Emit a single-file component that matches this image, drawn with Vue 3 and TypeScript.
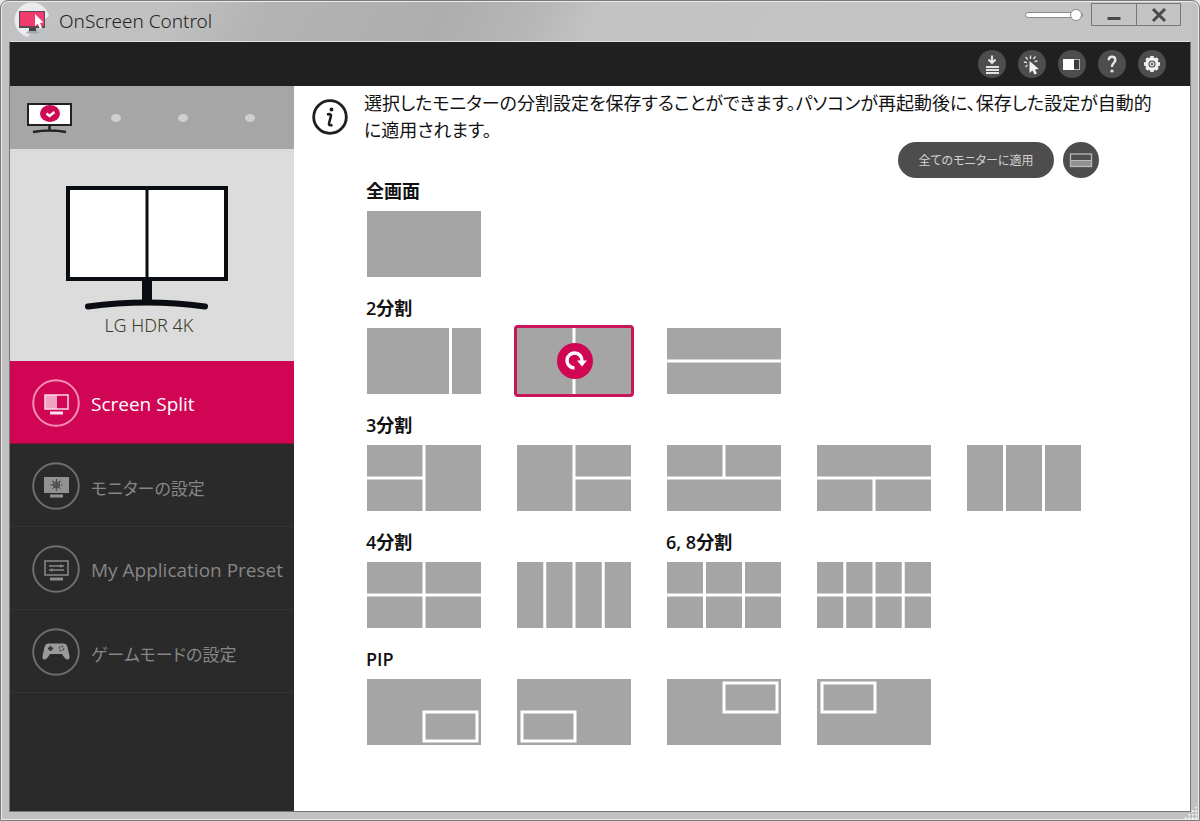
<script setup lang="ts">
import { ref } from 'vue'

type Rect = [number, number, number, number]

interface Layout {
  id: string
  label: string
  cells: Rect[]
  pip?: [number, number]
}

interface Group {
  title: string
  layouts: Layout[]
}

const grid = (cols: number, rows: number): Rect[] => {
  const gap = 3
  const w = (114 - gap * (cols - 1)) / cols
  const h = (66 - gap * (rows - 1)) / rows
  const out: Rect[] = []
  for (let r = 0; r < rows; r++) {
    for (let c = 0; c < cols; c++) out.push([c * (w + gap), r * (h + gap), w, h])
  }
  return out
}

const rows: Group[][] = [
  [{ title: '全画面', layouts: [{ id: 'full', label: '全画面', cells: grid(1, 1) }] }],
  [
    {
      title: '2分割',
      layouts: [
        { id: '2a', label: '左右 3:1', cells: [[0, 0, 82, 66], [85, 0, 29, 66]] },
        { id: '2b', label: '左右 1:1', cells: grid(2, 1) },
        { id: '2c', label: '上下 1:1', cells: grid(1, 2) },
      ],
    },
  ],
  [
    {
      title: '3分割',
      layouts: [
        { id: '3a', label: '左2 右1', cells: [[0, 0, 55.5, 31.5], [0, 34.5, 55.5, 31.5], [58.5, 0, 55.5, 66]] },
        { id: '3b', label: '左1 右2', cells: [[0, 0, 55.5, 66], [58.5, 0, 55.5, 31.5], [58.5, 34.5, 55.5, 31.5]] },
        { id: '3c', label: '上2 下1', cells: [[0, 0, 55.5, 31.5], [58.5, 0, 55.5, 31.5], [0, 34.5, 114, 31.5]] },
        { id: '3d', label: '上1 下2', cells: [[0, 0, 114, 31.5], [0, 34.5, 55.5, 31.5], [58.5, 34.5, 55.5, 31.5]] },
        { id: '3e', label: '縦3列', cells: grid(3, 1) },
      ],
    },
  ],
  [
    {
      title: '4分割',
      layouts: [
        { id: '4a', label: '2×2', cells: grid(2, 2) },
        { id: '4b', label: '縦4列', cells: grid(4, 1) },
      ],
    },
    {
      title: '6, 8分割',
      layouts: [
        { id: '6', label: '3×2', cells: grid(3, 2) },
        { id: '8', label: '4×2', cells: grid(4, 2) },
      ],
    },
  ],
  [
    {
      title: 'PIP',
      layouts: [
        { id: 'p1', label: '右下', cells: grid(1, 1), pip: [57, 33] },
        { id: 'p2', label: '左下', cells: grid(1, 1), pip: [5, 33] },
        { id: 'p3', label: '右上', cells: grid(1, 1), pip: [57, 4] },
        { id: 'p4', label: '左上', cells: grid(1, 1), pip: [5, 4] },
      ],
    },
  ],
]

const menu = [
  { id: 'split', label: 'Screen Split', lang: 'en' },
  { id: 'monitor', label: 'モニターの設定', lang: 'ja' },
  { id: 'preset', label: 'My Application Preset', lang: 'en' },
  { id: 'game', label: 'ゲームモードの設定', lang: 'ja' },
]

const activeMenu = ref('split')
const selected = ref('2b')
const opacity = ref(100)
</script>

<template>
  <div class="window">
    <header class="titlebar">
      <svg class="app-icon" viewBox="0 0 38 38" aria-hidden="true">
        <circle cx="19" cy="18" r="17.500" fill="#e9ebef" />
        <path d="M37 13.500Q24 21 14 36L20 38H38V13.500Z" fill="#bfc1c4" />
        <path d="M15 29h9l3 2.500h-14z" fill="#9faab2" />
        <rect x="6" y="9" width="26" height="17" fill="#5a4a55" />
        <rect x="7" y="10" width="24" height="14" fill="#f23a6c" />
        <rect x="16" y="26" width="7" height="3" fill="#444" />
        <path d="M22 12v12l2.800-2 2 4.500 2.200-1-2-4.500 3.500-.5z" fill="#fff" />
      </svg>
      <h1>OnScreen Control</h1>
      <input v-model="opacity" class="slider" type="range" min="0" max="100" aria-label="透明度" />
      <div class="win-buttons">
        <button type="button" aria-label="最小化">
          <svg viewBox="0 0 16 16"><path d="M1.500 11.500h13" stroke="#4a4a4a" stroke-width="3" /></svg>
        </button>
        <button type="button" aria-label="閉じる">
          <svg viewBox="0 0 16 16"><path d="M2 2l12 12M14 2L2 14" stroke="#4a4a4a" stroke-width="3" /></svg>
        </button>
      </div>
    </header>

    <div class="frame">
      <div class="toolbar">
        <button type="button" aria-label="ダウンロード">
          <svg viewBox="0 0 28 28">
            <path d="M14 5.500v7M10.500 9.500l3.500 3.500 3.500-3.500" fill="none" stroke="#e2e2e2" stroke-width="2" />
            <path d="M8 17h13M8 20h13M8 23h13" stroke="#e2e2e2" stroke-width="1.800" />
          </svg>
        </button>
        <button type="button" aria-label="クリック">
          <svg viewBox="0 0 28 28">
            <path d="M11.500 11v12l3-2.400 2 4 2.400-1.200-2-3.900 4-.5z" fill="#f2f2f2" />
            <path d="M12.500 9V5.500M15.500 9l2-2.700M9.800 9.500L7.500 7M9 12.500l-3.200-.5M9.500 15l-2 2M16.500 11.500l3-.5" stroke="#dcdcdc" stroke-width="1.400" />
          </svg>
        </button>
        <button type="button" aria-label="画面分割">
          <svg viewBox="0 0 28 28">
            <rect x="5.500" y="9.500" width="16" height="10" fill="#3c3c3c" stroke="#b5b5b5" />
            <rect x="5" y="9" width="11" height="11" fill="#fff" />
          </svg>
        </button>
        <button type="button" aria-label="ヘルプ">
          <svg viewBox="0 0 28 28">
            <path d="M10.700 10.300q0-3.500 3.300-3.500t3.300 3.200q0 1.900-1.700 3.100-1.600 1.200-1.600 3.900" fill="none" stroke="#e6e6e6" stroke-width="2.400" />
            <circle cx="14" cy="21" r="1.600" fill="#e6e6e6" />
          </svg>
        </button>
        <button type="button" aria-label="設定">
          <svg viewBox="0 0 28 28">
            <circle cx="14" cy="14" r="5.300" fill="none" stroke="#f2f2f2" stroke-width="3" />
            <path d="M14 6v16M6 14h16M8.400 8.400l11.200 11.200M19.600 8.400L8.400 19.600" stroke="#f2f2f2" stroke-width="3.400" />
            <circle cx="14" cy="14" r="3.600" fill="#4d4d4d" />
            <circle cx="14" cy="14" r="1.800" fill="none" stroke="#d6d6d6" stroke-width="1.400" />
          </svg>
        </button>
      </div>

      <div class="body">
        <aside class="sidebar">
          <div class="monitor-tabs">
            <button class="mini" type="button" aria-label="モニター 1">
              <svg viewBox="0 0 46 32">
                <rect x="2" y="2" width="43" height="21" fill="#fff" stroke="#222" stroke-width="2" />
                <path d="M23.500 22v6M7 30q17-3 33 0" fill="none" stroke="#222" stroke-width="2.500" />
                <ellipse cx="24" cy="11.500" rx="10" ry="8.500" fill="#cf0a55" />
                <path d="M20.500 11.500l3 2.500 5-4" fill="none" stroke="#fff" stroke-width="2.400" />
              </svg>
            </button>
            <button v-for="n in 3" :key="n" class="dot" type="button" :aria-label="`モニター ${n + 1}`"></button>
          </div>

          <figure class="monitor">
            <svg viewBox="0 0 162 125" aria-hidden="true">
              <rect x="2" y="2" width="158" height="91" fill="#fff" stroke="#090c10" stroke-width="4" />
              <path d="M81 2v91" stroke="#090c10" stroke-width="3" />
              <rect x="76" y="92" width="10" height="24" fill="#090c10" />
              <path d="M22 120.500Q81 112.500 139 120.500" fill="none" stroke="#090c10" stroke-width="6" stroke-linecap="round" />
            </svg>
            <figcaption>LG HDR 4K</figcaption>
          </figure>

          <nav class="menu">
            <button
              v-for="item in menu"
              :key="item.id"
              type="button"
              :class="{ active: item.id === activeMenu }"
              @click="activeMenu = item.id"
            >
              <svg viewBox="0 0 48 48" fill="none" aria-hidden="true">
                <circle class="ring" cx="24" cy="24" r="22.800" stroke-width="2" />
                <template v-if="item.id === 'split'">
                  <rect x="13" y="16" width="12" height="14" fill="#f3a3c2" />
                  <rect x="13" y="16" width="23" height="14" stroke="#fbd6e4" stroke-width="1.500" />
                  <rect x="18" y="32.500" width="13" height="3" fill="#ffe3ee" />
                </template>
                <template v-else-if="item.id === 'monitor'">
                  <rect x="12" y="15" width="25" height="16" fill="#929292" />
                  <rect x="18" y="32.500" width="13" height="3" fill="#929292" />
                  <g stroke="#444">
                    <path d="M24.500 17v12M18.500 23h12M20.500 19l8 8M28.500 19l-8 8" stroke-width="1.200" stroke-dasharray="2.500 1" />
                    <circle cx="24.500" cy="23" r="3.200" stroke-width="1" />
                  </g>
                </template>
                <template v-else-if="item.id === 'preset'">
                  <rect x="13" y="16" width="23" height="14" stroke="#8b8b8b" stroke-width="1.500" />
                  <path d="M17 21h15M17 25h15M29 19.500v3M20 23.500v3" stroke="#8b8b8b" stroke-width="1.400" />
                  <rect x="18" y="32.500" width="13" height="3" fill="#8b8b8b" />
                </template>
                <template v-else>
                  <path
                    d="M16.500 15.500h15q3 0 4 3.500l2 9q.5 3.500-2 3.500-2 0-3.500-2.500l-2-3H18l-2 3q-1.500 2.500-3.500 2.500-2.500 0-2-3.500l2-9q1-3.500 4-3.500z"
                    fill="#9a9a9a"
                  />
                  <path d="M18.500 18v5M16 20.500h5" stroke="#333" stroke-width="1.800" />
                  <circle cx="29.500" cy="20.500" r="2.200" stroke="#555" stroke-width="1.400" stroke-dasharray="2 1" />
                </template>
              </svg>
              <span :class="item.lang">{{ item.label }}</span>
            </button>
          </nav>
        </aside>

        <main class="content">
          <div class="notice">
            <svg viewBox="0 0 36 36" fill="none" aria-hidden="true">
              <circle cx="18" cy="18" r="16.300" stroke="#1e1e1e" stroke-width="2.800" />
              <circle cx="19.500" cy="10.500" r="1.900" fill="#1e1e1e" />
              <path d="M15 15.500q4-1 4 1l-2 8q-.5 2.500 3.500 1.500" stroke="#1e1e1e" stroke-width="2.600" />
            </svg>
            <p>選択したモニターの分割設定を保存することができます。パソコンが再起動後に、保存した設定が自動的<br />に適用されます。</p>
          </div>

          <div class="actions">
            <button class="apply" type="button">全てのモニターに適用</button>
            <button class="rotate" type="button" aria-label="画面の向き">
              <svg viewBox="0 0 36 36">
                <rect x="7" y="18" width="22" height="7" fill="#919191" />
                <rect x="7.500" y="12" width="21" height="12.500" fill="none" stroke="#b9b9b9" stroke-width="1.300" />
                <path d="M7 18.500h22" stroke="#b9b9b9" />
              </svg>
            </button>
          </div>

          <div v-for="(row, i) in rows" :key="i" class="row">
            <section v-for="group in row" :key="group.title">
              <h2>{{ group.title }}</h2>
              <div class="tiles">
                <button
                  v-for="layout in group.layouts"
                  :key="layout.id"
                  type="button"
                  class="tile"
                  :class="{ selected: layout.id === selected }"
                  :aria-label="layout.label"
                  :aria-pressed="layout.id === selected"
                  @click="selected = layout.id"
                >
                  <svg viewBox="0 0 114 66">
                    <rect
                      v-for="(c, k) in layout.cells"
                      :key="k"
                      :x="c[0]"
                      :y="c[1]"
                      :width="c[2]"
                      :height="c[3]"
                      fill="#a5a5a5"
                    />
                    <rect
                      v-if="layout.pip"
                      :x="layout.pip[0]"
                      :y="layout.pip[1]"
                      width="53"
                      height="29"
                      fill="none"
                      stroke="#fff"
                      stroke-width="3"
                    />
                    <g v-if="layout.id === selected" fill="none">
                      <circle cx="58" cy="33" r="18" fill="#d00554" />
                      <path d="M57.500 40A7.500 7.500 0 1 1 65 33" stroke="#fff" stroke-width="3.400" />
                      <path d="M60 32.500h10l-5 6z" fill="#fff" />
                    </g>
                  </svg>
                </button>
              </div>
            </section>
          </div>
        </main>
      </div>
    </div>
    <svg class="grip" viewBox="0 0 16 16" aria-hidden="true">
      <path d="M13 3h2M9 7h2M13 7h2M5 11h2M9 11h2M13 11h2M1 15h2M5 15h2M9 15h2M13 15h2" stroke="#f4f6fa" stroke-width="2" />
    </svg>
  </div>
</template>

<style>
body {
  margin: 0;
  background: #e9e9e9;
}
</style>

<style scoped>
* {
  box-sizing: border-box;
}
.window {
  position: relative;
  display: flex;
  flex-direction: column;
  min-height: 100vh;
  padding: 0 8px 8px;
  border: 1px solid #7a7a7a;
  border-radius: 8px 8px 0 0;
  box-shadow: inset 0 0 0 1px #ececec;
  background: #c1c1c1;
  font-family: "Open Sans", "Noto Sans CJK JP", sans-serif;
  font-feature-settings: "palt";
  color: #111;
}
button {
  display: flex;
  align-items: center;
  justify-content: center;
  margin: 0;
  padding: 0;
  border: 0;
  background: none;
  color: inherit;
  font: inherit;
  font-feature-settings: inherit;
  cursor: pointer;
}
svg {
  display: block;
}
.titlebar {
  display: flex;
  align-items: flex-start;
  height: 39px;
  margin-top: 1px;
  padding-right: 10px;
  background: linear-gradient(115deg, #c2c2c2 0, #c0c0c0 150px, #b3b3b3 240px, #aeaeae 400px, #b6b6b6 480px, #c3c3c3 540px, #c4c4c4 100%);
}
.app-icon {
  width: 38px;
  height: 38px;
  margin-left: 4px;
}
h1 {
  flex: 1;
  margin: 0 0 0 8px;
  font-family: "Noto Sans", sans-serif;
  font-size: 19px;
  font-weight: 300;
  line-height: 38px;
  color: #222;
}
.slider {
  appearance: none;
  width: 58px;
  height: 12px;
  margin: 7px 8px 0 0;
  background: none;
}
.slider::-webkit-slider-runnable-track {
  height: 6px;
  border: 1px solid #8a8a8a;
  border-radius: 3px;
  background: #fff;
}
.slider::-webkit-slider-thumb {
  appearance: none;
  width: 12px;
  height: 12px;
  margin-top: -4px;
  border: 1px solid #8a8a8a;
  border-radius: 50%;
  background: #fff;
}
.win-buttons {
  display: flex;
  margin-top: 1px;
  border: 1px solid #777;
}
.win-buttons button {
  width: 44px;
  height: 21px;
}
.win-buttons button + button {
  border-left: 1px solid #777;
}
.win-buttons svg {
  width: 16px;
  height: 16px;
}
.frame {
  flex: 1;
  display: flex;
  flex-direction: column;
  border: 1px solid #777;
  border-top-color: #e2e2e2;
}
.toolbar {
  display: flex;
  align-items: center;
  justify-content: flex-end;
  gap: 12px;
  height: 44px;
  padding-right: 24px;
  background: #202020;
}
.toolbar button {
  width: 28px;
  height: 28px;
  border-radius: 50%;
  background: #4d4d4d;
}
.toolbar svg {
  width: 28px;
  height: 28px;
}
.body {
  flex: 1;
  display: flex;
}
.sidebar {
  flex: none;
  width: 284px;
  background: #2a2a2a;
}
.monitor-tabs {
  display: flex;
  align-items: center;
  gap: 57px;
  height: 63px;
  padding-left: 16px;
  background: #a6a6a6;
}
.mini {
  margin-right: -18px;
}
.mini svg {
  width: 46px;
  height: 32px;
}
.dot {
  width: 10px;
  height: 8px;
  border-radius: 50%;
  background: #cfcfcf;
}
.monitor {
  display: flex;
  flex-direction: column;
  align-items: center;
  height: 212px;
  margin: 0;
  padding: 37px 10px 0 0;
  background: #dcdcdc;
}
.monitor svg {
  width: 162px;
  height: 125px;
}
.monitor figcaption {
  padding-left: 4px;
  font-family: "Noto Sans", sans-serif;
  font-size: 18px;
  font-weight: 300;
  line-height: 28px;
  color: #3a3a28;
}
.menu button {
  justify-content: flex-start;
  gap: 11px;
  width: 100%;
  height: 83px;
  padding: 2px 0 0 22px;
  border-bottom: 1px solid #343434;
  color: #868686;
  white-space: nowrap;
}
.menu svg {
  flex: none;
  width: 48px;
  height: 48px;
}
.en {
  padding-top: 2px;
  font-size: 19px;
}
.ja {
  padding-top: 2px;
  font-size: 17px;
}
.ring {
  stroke: #6e6e6e;
}
.menu .active {
  border-bottom-color: #8a1040;
  background: #d00554;
  color: #fff;
}
.active .ring {
  stroke: #f48fb5;
}
.content {
  flex: 1;
  min-width: 0;
  padding: 4px 18px 30px;
  background: #fff;
}
.notice {
  display: flex;
  gap: 16px;
}
.notice svg {
  flex: none;
  width: 36px;
  height: 36px;
  margin-top: 9px;
}
.notice p {
  margin: 0;
  font-size: 18px;
  line-height: 27px;
  white-space: nowrap;
}
.actions {
  display: flex;
  justify-content: flex-end;
  gap: 9px;
  margin-top: -2px;
  padding-right: 73px;
}
.actions button {
  height: 36px;
  border-radius: 18px;
  background: #4d4d4d;
  color: #d2d2d2;
}
.actions .apply {
  width: 156px;
  font-size: 12px;
}
.actions .rotate {
  width: 36px;
}
.rotate svg {
  width: 36px;
  height: 36px;
}
.row {
  display: flex;
  gap: 36px;
  margin-bottom: 18px;
  padding-left: 55px;
}
h2 {
  margin: 0 0 6px -1px;
  font-size: 18px;
  font-weight: 600;
  line-height: 27px;
}
.tiles {
  display: flex;
  gap: 36px;
}
.tile {
  width: 114px;
  height: 66px;
}
.tile svg {
  width: 114px;
  height: 66px;
}
.selected {
  border-radius: 1px;
  outline: 3px solid #c9165a;
}
.grip {
  position: absolute;
  right: 1px;
  bottom: 1px;
  width: 14px;
  height: 14px;
}
</style>
